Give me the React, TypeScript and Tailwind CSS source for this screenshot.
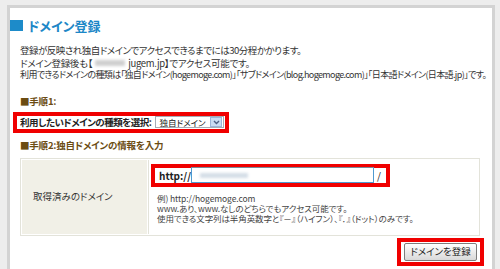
import React from "react";

const jp = "font-['Noto_Sans_CJK_JP','Noto_Sans',sans-serif] [font-feature-settings:'palt']";

function StepTitle({ children }: { children: React.ReactNode }) {
  return <div className="text-[9.5px] leading-[12px] font-bold text-[#6b4c12] tracking-[-0.2px]">■{children}</div>;
}

function DomainTypeSelect() {
  return <div className="ml-[-7px] w-[216px] h-[21px] border-[4px] border-[#f00000] flex items-center pl-[3px] gap-[4px]">
    <span className="text-[9.5px] font-bold text-[#222] whitespace-nowrap tracking-[-0.5px]">利用したいドメインの種類を選択:</span>
    <div className="flex items-center h-[12px] w-[69px] border border-[#a5acb5] bg-white">
      <span className="flex-1 text-[8.5px] leading-none pl-[3px] text-[#222] whitespace-nowrap">独自ドメイン</span>
      <span className="shrink-0 w-[12px] h-[10px] mr-[1px] bg-[#c9dcf3] border border-[#9bb5d8] flex items-center justify-center">
        <svg width="7" height="5" viewBox="0 0 7 5"><path d="M1 1 L3.5 3.5 L6 1" stroke="#4d6185" strokeWidth="1.4" fill="none" /></svg>
      </span>
    </div>
  </div>
}

function DomainTable() {
  return <div className="w-[460px] border border-[#e3e3da] p-[1px] flex">
    <div className="w-[125px] bg-[#f1f0e7] flex items-center pl-[11px] text-[9.5px] text-[#333]">取得済みのドメイン</div>
    <div className="flex-1 ml-[1px] border-l border-[#e3e3da] pl-[2px] pt-[4px] pb-[11px]">
      <div className="w-[239px] h-[23px] border-[4px] border-[#f00000] flex items-center pl-[4px]">
        <span className="text-[10px] font-bold text-[#222] w-[32px]">http://</span>
        <div className="w-[183px] h-[16px] border border-[#4f9ad0] border-t-[#7a8a99] bg-white flex items-center pl-[8px]">
          <span className="w-[48px] h-[5px] bg-[#d3dde6] blur-[1.5px]" />
        </div>
        <span className="text-[10px] text-[#222] ml-[3px]">/</span>
      </div>
      <div className="mt-[6px] pl-[6px] text-[8.5px] leading-[10px] text-[#444] tracking-[-0.1px] whitespace-nowrap">
        <p>例) http://hogemoge.com</p>
        <p>www.あり、www.なしのどちらでもアクセス可能です。</p>
        <p>使用できる文字列は半角英数字と『－』（ハイフン）、『．』（ドット）のみです。</p>
      </div>
    </div>
  </div>
}

export default function App() {
  return <div className={`w-[500px] h-[269px] overflow-hidden bg-[#ededed] pt-[5px] pl-[7px] pr-[5px] ${jp}`}>
    <div className="bg-white border-[3px] border-b-0 border-[#d3d3d3] h-[270px] pl-[10px] pr-[5px]">
      <div className="flex items-center mt-[12px] ml-[-10px] h-[11px]">
        <span className="w-[13px] h-[11px] bg-[#1d8bc9]" />
        <span className="ml-[5px] text-[13px] font-bold text-[#1d87c7] leading-none">ドメイン登録</span>
      </div>
      <div className="mt-[13px] text-[9.5px] leading-[12.5px] text-[#333] whitespace-nowrap">
        <p className="tracking-[-0.5px]">登録が反映され独自ドメインでアクセスできるまでには30分程かかります。</p>
        <p className="flex items-center tracking-[-0.3px]">ドメイン登録後も【<span className="inline-block w-[30px] h-[6px] bg-[#cfcfcf] blur-[1.5px] mx-[3px]" />jugem.jp】でアクセス可能です。</p>
        <p className="text-[9px] tracking-[-0.62px]">利用できるドメインの種類は「独自ドメイン(hogemoge.com)」「サブドメイン(blog.hogemoge.com)」「日本語ドメイン(日本語.jp)」です。</p>
      </div>
      <div className="mt-[13px]">
        <StepTitle>手順1:</StepTitle>
      </div>
      <div className="mt-[5px]">
        <DomainTypeSelect />
      </div>
      <div className="mt-[6px]">
        <StepTitle>手順2:独自ドメインの情報を入力</StepTitle>
      </div>
      <div className="mt-[7px]">
        <DomainTable />
      </div>
      <div className="flex justify-end mt-[2px] pr-[3px]">
        <div className="w-[87px] h-[28px] border-[4px] border-[#f00000] flex items-center justify-center">
          <button className="w-[73px] h-[18px] rounded-[2px] border border-[#7d7d7d] bg-gradient-to-b from-white to-[#d9d9d9] text-[9.5px] text-[#222] leading-none">ドメインを登録</button>
        </div>
      </div>
    </div>
  </div>
}
